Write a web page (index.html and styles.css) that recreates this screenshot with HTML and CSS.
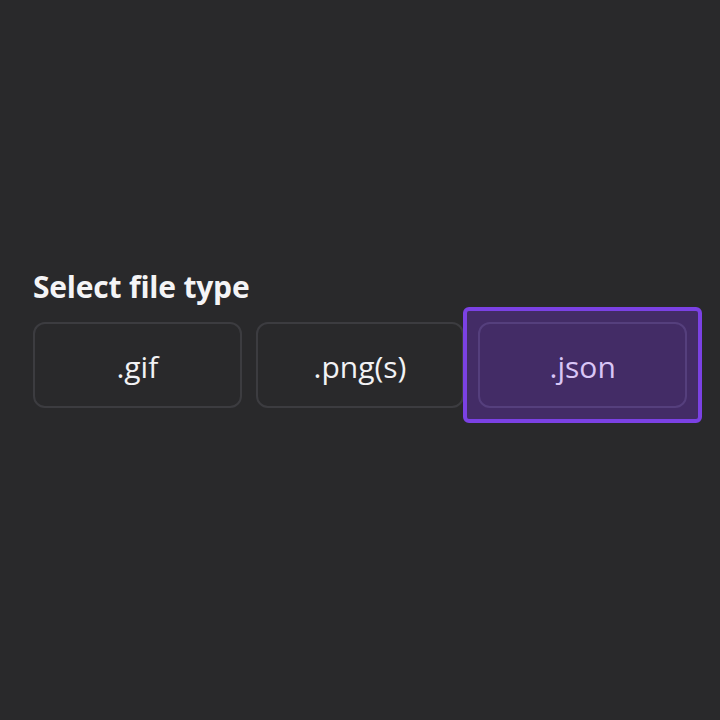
FILE: index.html
```html
<!DOCTYPE html>
<html>
<head>
<meta charset="utf-8">
<link rel="stylesheet" href="styles.css">
</head>
<body>
<main class="page">
  <section class="picker">
    <h2 class="title">Select file type</h2>
    <div class="options">
      <button class="option">.gif</button>
      <button class="option">.png(s)</button>
      <button class="option selected">.json</button>
    </div>
  </section>
</main>
</body>
</html>
```
FILE: styles.css
```css
html, body {
  margin: 0;
  padding: 0;
  background: #29292b;
}
.page {
  width: 720px;
  height: 720px;
  box-sizing: border-box;
  padding: 266px 33px 0 33px;
  font-family: "Open Sans", "Noto Sans", sans-serif;
}
.title {
  margin: 0 0 14px 0;
  font-size: 30px;
  font-weight: 700;
  color: #f4f4f6;
  line-height: 42px;
  letter-spacing: -0.2px;
}
.options {
  display: flex;
  gap: 14px;
}
.option {
  position: relative;
  width: 209px;
  height: 86px;
  box-sizing: border-box;
  border: 2px solid #3c3c40;
  border-radius: 12px;
  background: transparent;
  color: #f2f2f4;
  font-family: inherit;
  font-size: 30px;
  font-weight: 400;
  padding: 3px 0 0 0;
}
.option.selected {
  border-color: transparent;
  color: #d9c6f6;
  z-index: 0;
}
.option.selected::before {
  content: "";
  position: absolute;
  inset: -17px;
  border: 4px solid #7b41e4;
  border-radius: 6px;
  background: #432c66;
  z-index: -1;
}
.option.selected::after {
  content: "";
  position: absolute;
  inset: -2px;
  border: 2px solid #553f7d;
  border-radius: 12px;
}
```
